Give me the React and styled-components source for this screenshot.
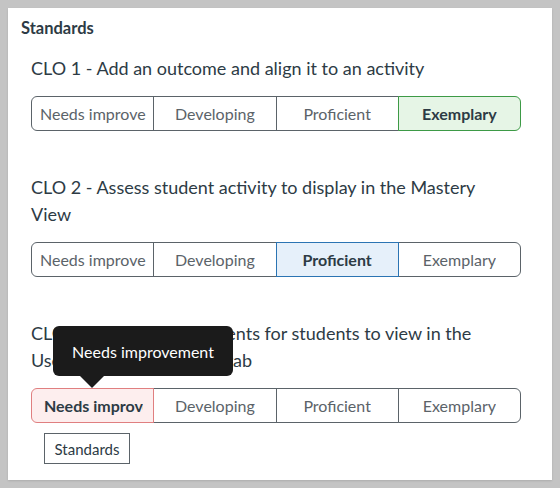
import React from "react";
import styled, { createGlobalStyle, css } from "styled-components";

const Global = createGlobalStyle`
  html, body { margin: 0; padding: 0; }
  body {
    background: #c4c4c4;
    padding: 8px;
    font-family: Lato, "Noto Sans", sans-serif;
  }
`;

const Panel = styled.div`
  width: 544px;
  height: 472px;
  box-sizing: border-box;
  background: #fff;
  padding: 10px 13px;
  box-shadow: 0 1px 2px rgba(0,0,0,0.12);
`;

const Heading = styled.h2`
  margin: 0 0 17px;
  font-size: 16.5px;
  line-height: 20px;
  font-weight: 700;
  color: #2d3b45;
`;

const Section = styled.div`
  position: relative;
  margin-left: 10px;
  margin-bottom: 43px;
`;

const Title = styled.div`
  font-size: 18px;
  line-height: 27px;
  color: #2d3b45;
  margin-bottom: 14px;
  width: 470px;
`;

const Control = styled.div`
  display: flex;
  width: 490px;
  height: 35px;
`;

const tones = {
  green: { border: "#3d9a46", bg: "#e6f5e6" },
  blue: { border: "#2b74b3", bg: "#e6f0fa" },
  red: { border: "#e07f80", bg: "#fdeeee" },
};

const Segment = styled.div`
  flex: 1 1 0;
  min-width: 0;
  box-sizing: border-box;
  border: 1px solid #5b6369;
  margin-left: -1px;
  padding: 0 5px;
  display: flex;
  align-items: center;
  justify-content: center;
  font-size: 16px;
  color: #5b6369;
  background: #fff;
  position: relative;
  &:first-child {
    margin-left: 0;
    border-radius: 6px 0 0 6px;
    justify-content: flex-start;
  }
  &:last-child { border-radius: 0 6px 6px 0; }
  ${(p) =>
    p.$tone &&
    css`
      z-index: 1;
      font-weight: 700;
      color: #2d3b45;
      border-color: ${tones[p.$tone].border};
      background: ${tones[p.$tone].bg};
    `}
`;

const Label = styled.span`
  display: block;
  overflow: hidden;
  white-space: nowrap;
  margin: ${(p) => p.$inset || "0"};
`;

const SmallButton = styled.div`
  margin: 10px 0 0 13px;
  width: 86px;
  height: 31px;
  box-sizing: border-box;
  border: 1px solid #5b6369;
  display: flex;
  align-items: center;
  justify-content: center;
  font-size: 15px;
  color: #2d3b45;
`;

const Tooltip = styled.div`
  position: absolute;
  left: 22px;
  top: 6px;
  width: 180px;
  height: 50px;
  box-sizing: border-box;
  background: #1b1b1b;
  color: #fff;
  border-radius: 6px;
  display: flex;
  align-items: center;
  justify-content: center;
  font-size: 16px;
  z-index: 5;
  &::after {
    content: "";
    position: absolute;
    left: 26px;
    bottom: -12px;
    border-left: 13px solid transparent;
    border-right: 13px solid transparent;
    border-top: 13px solid #1b1b1b;
  }
`;

const levels = ["Needs improve", "Developing", "Proficient", "Exemplary"];

function Rating({ selected, tone, firstLabel }) {
  return (
    <Control>
      {levels.map((l, i) => {
        const active = i === selected;
        let inset;
        if (i === 0) inset = active ? "0 5px 0 7px" : "0 0 0 3px";
        return (
          <Segment key={l} $tone={active ? tone : undefined}>
            <Label $inset={inset}>{i === 0 && firstLabel ? firstLabel : l}</Label>
          </Segment>
        );
      })}
    </Control>
  );
}

export default function App() {
  return (
    <>
      <Global />
      <Panel>
        <Heading>Standards</Heading>
        <Section>
          <Title>CLO 1 - Add an outcome and align it to an activity</Title>
          <Rating selected={3} tone="green" />
        </Section>
        <Section>
          <Title>CLO 2 - Assess student activity to display in the Mastery View</Title>
          <Rating selected={2} tone="blue" />
        </Section>
        <Section>
          <Title>CLO 3 - Release assessments for students to view in the User Progress Standards tab</Title>
          <Tooltip>Needs improvement</Tooltip>
          <Rating selected={0} tone="red" firstLabel="Needs improvement" />
          <SmallButton>Standards</SmallButton>
        </Section>
      </Panel>
    </>
  );
}
